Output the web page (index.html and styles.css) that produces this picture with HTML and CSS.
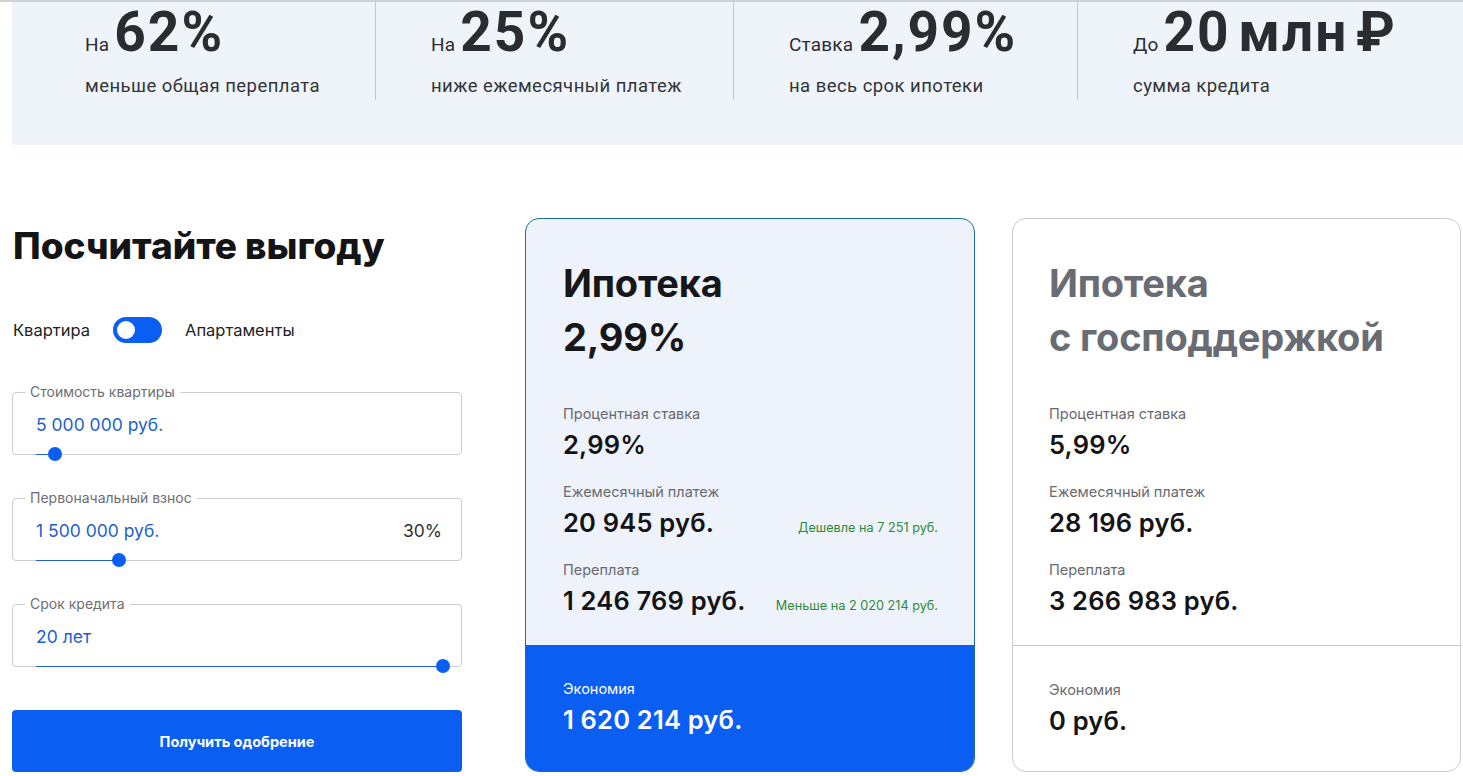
FILE: index.html
```html
<!DOCTYPE html>
<html lang="ru">
<head>
<meta charset="utf-8">
<title>Ипотека 2,99%</title>
<link rel="stylesheet" href="styles.css">
</head>
<body>
<div class="topline"></div>
<section class="stats">
  <div class="stat stat-1">
    <div class="stat-row"><span class="stat-pre">На</span><span class="stat-big">62%</span></div>
    <div class="stat-sub">меньше общая переплата</div>
  </div>
  <div class="stat stat-2">
    <div class="stat-row"><span class="stat-pre">На</span><span class="stat-big">25%</span></div>
    <div class="stat-sub">ниже ежемесячный платеж</div>
  </div>
  <div class="stat stat-3">
    <div class="stat-row"><span class="stat-pre">Ставка</span><span class="stat-big">2,99%</span></div>
    <div class="stat-sub">на весь срок ипотеки</div>
  </div>
  <div class="stat stat-4">
    <div class="stat-row"><span class="stat-pre">До</span><span class="stat-big">20 млн ₽</span></div>
    <div class="stat-sub">сумма кредита</div>
  </div>
</section>

<section class="main">
  <div class="calc">
    <h2 class="calc-title">Посчитайте выгоду</h2>
    <div class="switch-row">
      <span>Квартира</span>
      <span class="switch"><span class="knob"></span></span>
      <span>Апартаменты</span>
    </div>

    <fieldset class="field">
      <legend>Стоимость квартиры</legend>
      <div class="field-row"><span class="field-val">5 000 000 руб.</span></div>
      <div class="slider"><div class="slider-fill" style="width:4.7%"></div><div class="thumb" style="left:4.7%"></div></div>
    </fieldset>

    <fieldset class="field">
      <legend>Первоначальный взнос</legend>
      <div class="field-row"><span class="field-val">1 500 000 руб.</span><span class="field-pct">30%</span></div>
      <div class="slider"><div class="slider-fill" style="width:20.4%"></div><div class="thumb" style="left:20.4%"></div></div>
    </fieldset>

    <fieldset class="field">
      <legend>Срок кредита</legend>
      <div class="field-row"><span class="field-val">20 лет</span></div>
      <div class="slider"><div class="slider-fill" style="width:100%"></div><div class="thumb" style="left:100%"></div></div>
    </fieldset>

    <button class="btn">Получить одобрение</button>
  </div>

  <div class="card card-main">
    <div class="card-body">
      <h3 class="card-title">Ипотека<br>2,99%</h3>
      <div class="group">
        <div class="label">Процентная ставка</div>
        <div class="value-row"><span class="value">2,99%</span></div>
      </div>
      <div class="group">
        <div class="label">Ежемесячный платеж</div>
        <div class="value-row"><span class="value">20 945 руб.</span><span class="note">Дешевле на 7 251 руб.</span></div>
      </div>
      <div class="group">
        <div class="label">Переплата</div>
        <div class="value-row"><span class="value">1 246 769 руб.</span><span class="note">Меньше на 2 020 214 руб.</span></div>
      </div>
    </div>
    <div class="card-foot foot-blue">
      <div class="label">Экономия</div>
      <div class="value-row"><span class="value">1 620 214 руб.</span></div>
    </div>
  </div>

  <div class="card card-alt">
    <div class="card-body">
      <h3 class="card-title">Ипотека<br>с господдержкой</h3>
      <div class="group">
        <div class="label">Процентная ставка</div>
        <div class="value-row"><span class="value">5,99%</span></div>
      </div>
      <div class="group">
        <div class="label">Ежемесячный платеж</div>
        <div class="value-row"><span class="value">28 196 руб.</span></div>
      </div>
      <div class="group">
        <div class="label">Переплата</div>
        <div class="value-row"><span class="value">3 266 983 руб.</span></div>
      </div>
    </div>
    <div class="card-foot foot-plain">
      <div class="label">Экономия</div>
      <div class="value-row"><span class="value">0 руб.</span></div>
    </div>
  </div>
</section>
</body>
</html>
```

FILE: styles.css
```css
* { box-sizing: border-box; }
html, body { margin: 0; padding: 0; background: #fff; }
body {
  font-family: "Inter", "Noto Sans", sans-serif;
  color: #1b1b1f;
  width: 1463px;
  overflow: hidden;
}
.topline {
  height: 2px;
  background: #cfd3d8;
}
.stats {
  display: flex;
  margin-left: 12px;
  height: 143px;
  background: #eff4fb;
  padding-left: 18px;
  font-family: "Roboto", "Liberation Sans", sans-serif;
  align-items: flex-start;
}
.stat {
  flex: none;
  padding: 4px 0 2px 55px;
  border-right: 1px solid #c4c8cd;
  height: 98px;
}
.stat-1 { width: 346px; }
.stat-2 { width: 358px; }
.stat-3 { width: 344px; }
.stat-4 { flex: 1; border-right: none; }
.stat-row {
  display: flex;
  align-items: baseline;
  line-height: 52px;
  height: 52px;
  white-space: nowrap;
}
.stat-pre {
  font-size: 19px;
  color: #2c2d30;
  margin-right: 5px;
  letter-spacing: 0.2px;
}
.stat-big {
  font-size: 55px;
  font-weight: 700;
  color: #2b2c30;
  letter-spacing: 2px;
  word-spacing: -8px;
}
.stat-sub {
  margin-top: 16px;
  font-size: 18.5px;
  line-height: 24px;
  color: #333438;
  letter-spacing: 0.45px;
  white-space: nowrap;
}

.main {
  display: flex;
  align-items: flex-start;
  padding: 73px 0 0 12px;
}
.calc {
  width: 450px;
  margin-right: 63px;
}
.calc-title {
  margin: 6px 0 0 1px;
  font-size: 37px;
  line-height: 44px;
  font-weight: 800;
  color: #141416;
  letter-spacing: 0;
}
.switch-row {
  margin-top: 49px;
  height: 26px;
  display: flex;
  align-items: center;
  gap: 23px;
  font-size: 16.5px;
  color: #222;
  padding-left: 1px;
}
.switch {
  width: 49px;
  height: 26px;
  border-radius: 13px;
  background: #0a5ef2;
  display: flex;
  align-items: center;
  padding-left: 4px;
}
.knob {
  width: 18px;
  height: 18px;
  border-radius: 50%;
  background: #fff;
}

.field {
  position: relative;
  margin: 40px 0 0 0;
  padding: 0 19px 18px 23px;
  border: 1px solid #cdcdcd;
  border-radius: 4px;
  min-width: 0;
}
.field + .field { margin-top: 34px; }
.field legend {
  margin-left: -11px;
  padding: 0 5px;
  font-size: 14px;
  line-height: 18px;
  color: #6e6e72;
}
.field-row {
  margin-top: 11px;
  display: flex;
  justify-content: space-between;
  align-items: center;
  height: 24px;
  font-size: 17.5px;
}
.field-val { color: #1d5fcf; }
.field-pct { color: #333; }
.slider {
  position: absolute;
  left: 23px;
  right: 18px;
  bottom: -1px;
  height: 1px;
}
.slider-fill {
  position: relative;
  height: 1px;
  background: #1f62c9;
}
.thumb {
  position: absolute;
  top: -7px;
  margin-left: -7px;
  width: 14px;
  height: 14px;
  border-radius: 50%;
  background: #0a5ef2;
}

.btn {
  display: block;
  width: 100%;
  height: 62px;
  margin-top: 43px;
  border: none;
  border-radius: 4px;
  background: #0a5ef2;
  color: #fff;
  font-family: "Inter", sans-serif;
  font-size: 14.5px;
  font-weight: 700;
}

.card {
  height: 554px;
  border-radius: 14px;
  overflow: hidden;
  display: flex;
  flex-direction: column;
}
.card-main {
  width: 450px;
  margin-right: 37px;
  border: 1px solid #1b6d93;
  background: #eef3fb;
}
.card-alt {
  width: 449px;
  border: 1px solid #cacaca;
  background: #fff;
}
.card-body {
  flex: 1;
  padding: 37px 36px 0 37px;
}
.card-alt .card-body, .card-alt .card-foot { padding-left: 36px; }
.card-title {
  margin: 0;
  font-size: 38px;
  line-height: 54px;
  font-weight: 700;
  color: #17171a;
  letter-spacing: -0.2px;
}
.card-alt .card-title { color: #696d73; }
.group { margin-top: 22px; }
.card-title + .group { margin-top: 40px; }
.label {
  font-size: 14.5px;
  line-height: 20px;
  color: #6a6a6e;
}
.value-row {
  margin-top: 6px;
  display: flex;
  justify-content: space-between;
  align-items: baseline;
  height: 30px;
  line-height: 30px;
}
.value {
  font-size: 25.5px;
  font-weight: 600;
  color: #141416;
  letter-spacing: 0.2px;
}
.note {
  font-size: 12.7px;
  color: #2f8a35;
}
.card-foot {
  height: 126px;
  padding: 34px 36px 0 37px;
}
.foot-blue {
  background: #0a5ef2;
}
.foot-blue .label, .foot-blue .value { color: #fff; }
.foot-plain {
  border-top: 1px solid #cacaca;
}
```
